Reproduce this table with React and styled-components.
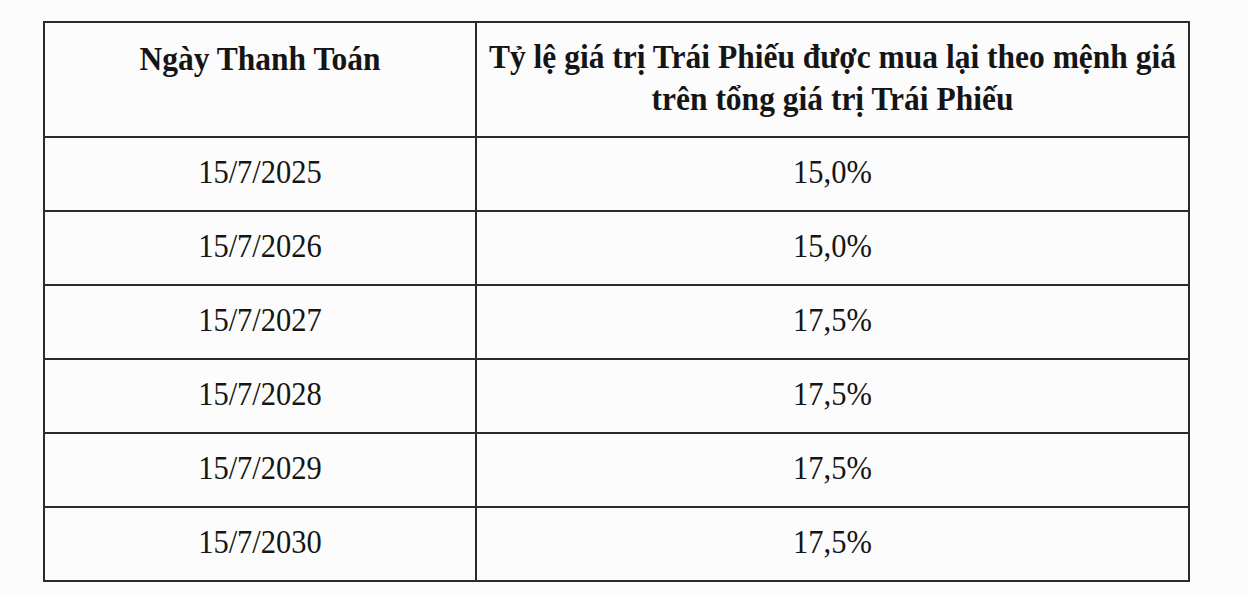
import styled, { createGlobalStyle } from "styled-components";

const GlobalStyle = createGlobalStyle`
  html, body {
    margin: 0;
    padding: 0;
    background-color: #fcfcfc;
  }
  body {
    font-family: "Liberation Serif", "Times New Roman", serif;
    color: #151515;
  }
`;

const Page = styled.div`
  width: 1248px;
  height: 594px;
  padding-top: 21px;
  padding-left: 43px;
  box-sizing: border-box;
`;

const Table = styled.table`
  width: 1147px;
  border-collapse: collapse;
  table-layout: fixed;
  border: 2px solid #2b2b2b;
`;

const HeadCell = styled.th`
  border: 2px solid #2b2b2b;
  height: 115px;
  box-sizing: border-box;
  vertical-align: top;
  padding: 17px 8px 0;
  font-size: 31.5px;
  font-weight: 700;
  line-height: 38px;
  text-align: center;
`;

const Cell = styled.td`
  border: 2px solid #2b2b2b;
  height: 74px;
  box-sizing: border-box;
  padding: 0 0 4px;
  font-size: 30.5px;
  font-weight: 400;
  text-align: center;
  vertical-align: middle;
`;

const Tall = styled.span`
  display: inline-block;
  transform: scaleY(1.1);
`;

const rows = [
  ["15/7/2025", "15,0%"],
  ["15/7/2026", "15,0%"],
  ["15/7/2027", "17,5%"],
  ["15/7/2028", "17,5%"],
  ["15/7/2029", "17,5%"],
  ["15/7/2030", "17,5%"],
];

export default function App() {
  return (
    <>
      <GlobalStyle />
      <Page>
        <Table>
          <colgroup>
            <col style={{ width: "432px" }} />
            <col />
          </colgroup>
          <thead>
            <tr>
              <HeadCell>
                <Tall>Ngày Thanh Toán</Tall>
              </HeadCell>
              <HeadCell>
                <Tall>
                  Tỷ lệ giá trị Trái Phiếu được mua lại theo mệnh giá
                  <br />
                  trên tổng giá trị Trái Phiếu
                </Tall>
              </HeadCell>
            </tr>
          </thead>
          <tbody>
            {rows.map(([date, rate]) => (
              <tr key={date}>
                <Cell>
                  <Tall>{date}</Tall>
                </Cell>
                <Cell>
                  <Tall>{rate}</Tall>
                </Cell>
              </tr>
            ))}
          </tbody>
        </Table>
      </Page>
    </>
  );
}
